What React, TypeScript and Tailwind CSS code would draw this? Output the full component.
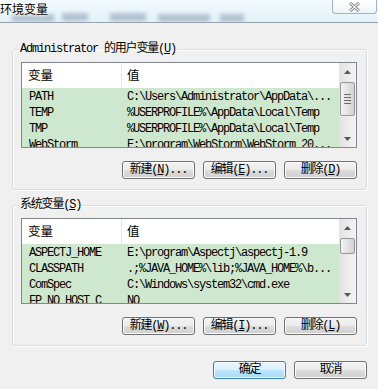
import type { ReactNode } from "react";

type Row = { name: string; value: string };

const USER_ROWS: Row[] = [
  { name: "PATH", value: "C:\\Users\\Administrator\\AppData\\..." },
  { name: "TEMP", value: "%USERPROFILE%\\AppData\\Local\\Temp" },
  { name: "TMP", value: "%USERPROFILE%\\AppData\\Local\\Temp" },
  { name: "WebStorm", value: "E:\\program\\WebStorm\\WebStorm 20..." },
];

const SYSTEM_ROWS: Row[] = [
  { name: "ASPECTJ_HOME", value: "E:\\program\\Aspectj\\aspectj-1.9" },
  { name: "CLASSPATH", value: ".;%JAVA_HOME%\\lib;%JAVA_HOME%\\b..." },
  { name: "ComSpec", value: "C:\\Windows\\system32\\cmd.exe" },
  { name: "FP_NO_HOST_C", value: "NO" },
];

function Arrow({ down }: { down?: boolean }) {
  return (
    <svg width="7" height="4" viewBox="0 0 7 4">
      <path d={down ? "M0 0h7L3.5 4z" : "M0 4h7L3.5 0z"} fill="#4d5a6a" />
    </svg>
  );
}

function ScrollBar({ thumbTop, thumbHeight, grip }: { thumbTop: number; thumbHeight: number; grip?: boolean }) {
  return (
    <div className="flex w-[17px] flex-col bg-[linear-gradient(90deg,#e3e3e3,#f4f4f4)]">
      <div className="flex h-[17px] items-center justify-center">
        <Arrow />
      </div>
      <div className="flex-1">
        <div
          className="mx-[1px] flex flex-col items-center justify-center gap-[2px] rounded-[2px] border border-[#979797] bg-[linear-gradient(90deg,#f4f4f4,#e3e3e3_50%,#d2d2d2)]"
          style={{ marginTop: thumbTop, height: thumbHeight }}
        >
          {grip && (
            <>
              <div className="h-px w-[7px] bg-[#6d6d6d]" />
              <div className="h-px w-[7px] bg-[#6d6d6d]" />
              <div className="h-px w-[7px] bg-[#6d6d6d]" />
              <div className="h-px w-[7px] bg-[#6d6d6d]" />
            </>
          )}
        </div>
      </div>
      <div className="flex h-[17px] items-center justify-center">
        <Arrow down />
      </div>
    </div>
  );
}

function VarList({ rows, thumbTop, thumbHeight, grip }: { rows: Row[]; thumbTop: number; thumbHeight: number; grip?: boolean }) {
  return (
    <div className="mt-[7px] flex h-[86px] overflow-hidden border border-[#828790] bg-white">
      <div className="flex min-w-0 flex-1 flex-col overflow-hidden">
        <div className="flex h-[25px] shrink-0 items-center font-['Noto_Sans_CJK_SC',sans-serif] text-[12.5px] text-black">
          <div className="w-[99px] pl-[6px]">变量</div>
          <div className="h-full w-px bg-[#e5e5e5]" />
          <div className="pl-[5px]">值</div>
        </div>
        {rows.map((r) => (
          <div
            key={r.name}
            className="flex h-[16px] shrink-0 items-center whitespace-nowrap bg-[#cde8cf] pt-[2px] text-[12px] leading-[14px] tracking-[-1.2px] text-black"
          >
            <div className="w-[100px] pl-[7px]">{r.name}</div>
            <div className="pl-[5px]">{r.value}</div>
          </div>
        ))}
      </div>
      <ScrollBar thumbTop={thumbTop} thumbHeight={thumbHeight} grip={grip} />
    </div>
  );
}

function Btn({ children, primary }: { children: ReactNode; primary?: boolean }) {
  return (
    <button
      className={
        primary
          ? "flex h-[18px] w-[73px] items-center justify-center rounded-[3px] border border-[#3c7fb1] bg-[linear-gradient(#eaf6fd_0%,#d9f0fc_50%,#bee6fd_50%,#a7d9f5_100%)] text-[12px] tracking-[-1.2px] text-black shadow-[inset_0_0_0_1px_#f4fbff]"
          : "flex h-[18px] w-[73px] items-center justify-center rounded-[3px] border border-[#707070] bg-[linear-gradient(#f2f2f2_0%,#ebebeb_50%,#dddddd_50%,#cfcfcf_100%)] text-[12px] tracking-[-1.2px] text-black shadow-[inset_0_0_0_1px_#fcfcfc]"
      }
    >
      {children}
    </button>
  );
}

function Group({ label, rows, thumbTop, thumbHeight, grip, keys, className }: {
  label: ReactNode;
  rows: Row[];
  thumbTop: number;
  thumbHeight: number;
  grip?: boolean;
  keys: [string, string, string];
  className: string;
}) {
  return (
    <fieldset className={`rounded-[3px] border border-[#d5dfe5] pb-[10px] pl-[8px] pr-[9px] shadow-[inset_1px_1px_0_#ffffff,1px_1px_0_#ffffff] ${className}`}>
      <legend className="-ml-[2px] px-[1px] text-[12px] leading-[12px] tracking-[-1.2px] text-black">{label}</legend>
      <VarList rows={rows} thumbTop={thumbTop} thumbHeight={thumbHeight} grip={grip} />
      <div className="mt-[13px] flex justify-end gap-[8px]">
        <Btn>
          新建(<span className="underline">{keys[0]}</span>)...
        </Btn>
        <Btn>
          编辑(<span className="underline">{keys[1]}</span>)...
        </Btn>
        <Btn>
          删除(<span className="underline">{keys[2]}</span>)
        </Btn>
      </div>
    </fieldset>
  );
}

export default function App() {
  return (
    <div className="h-[389px] w-[378px] overflow-hidden bg-[#f0f0f0] font-['Liberation_Mono','Noto_Sans_CJK_SC',monospace]">
      {/* aero title bar */}
      <div className="relative flex h-[23px] items-start justify-between overflow-hidden border-b border-[#9aa3ad] bg-[linear-gradient(#f3fbfe,#e2f2f9)]">
        <div className="absolute left-[12px] top-[14px] h-[8px] w-[42px] bg-[#7c8ea4] opacity-50 blur-[2px]" />
        <div className="absolute left-[62px] top-[13px] h-[8px] w-[26px] bg-[#7c8ea4] opacity-50 blur-[2px]" />
        <div className="absolute left-[110px] top-[13px] h-[8px] w-[36px] bg-[#7c8ea4] opacity-50 blur-[2px]" />
        <div className="absolute left-[158px] top-[14px] h-[8px] w-[52px] bg-[#7c8ea4] opacity-50 blur-[2px]" />
        <div className="absolute left-[220px] top-[14px] h-[8px] w-[24px] bg-[#7c8ea4] opacity-50 blur-[2px]" />
        <div className="relative pt-[2px] font-['Noto_Sans_CJK_SC',sans-serif] text-[12px] leading-[14px] text-black [text-shadow:0_0_5px_#fff,0_0_5px_#fff]">
          环境变量
        </div>
        <div className="relative mr-[1px] flex h-[14px] w-[45px] items-center justify-center rounded-b-[4px] border border-t-0 border-[#a4b0bd] bg-[linear-gradient(#ffffff,#eef4f8)]">
          <svg width="13" height="10" viewBox="0 0 13 10">
            <path d="M2 1l4.5 4L11 1M2 9l4.5-4L11 9" stroke="#7a7a7a" strokeWidth="3" fill="none" />
            <path d="M2 1l4.5 4L11 1M2 9l4.5-4L11 9" stroke="#f4f4f4" strokeWidth="1.2" fill="none" />
          </svg>
        </div>
      </div>

      <div className="pl-[12px] pr-[11px]">
        <Group
          className="mt-[20px]"
          label={
            <>
              Administrator 的用户变量(<span className="underline">U</span>)
            </>
          }
          rows={USER_ROWS}
          thumbTop={2}
          thumbHeight={34}
          grip
          keys={["N", "E", "D"]}
        />
        <Group
          className="mt-[9px]"
          label={
            <>
              系统变量(<span className="underline">S</span>)
            </>
          }
          rows={SYSTEM_ROWS}
          thumbTop={2}
          thumbHeight={16}
          keys={["W", "I", "L"]}
        />
        <div className="mt-[15px] flex justify-end gap-[8px]">
          <Btn primary>确定</Btn>
          <Btn>取消</Btn>
        </div>
      </div>
    </div>
  );
}
